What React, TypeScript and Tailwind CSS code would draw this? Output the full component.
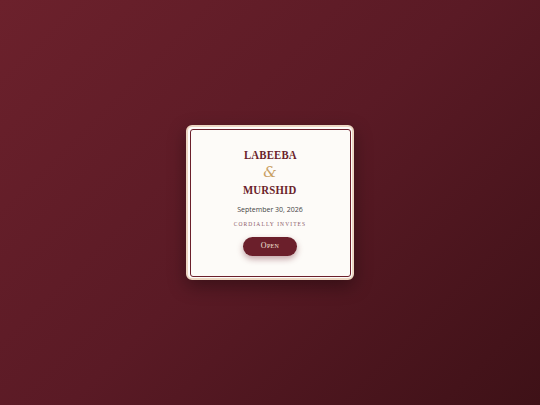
import React from "react";

export default function App() {
  return (
    <div className="w-[540px] h-[405px] flex items-center justify-center bg-[linear-gradient(135deg,#6c212c_0%,#5a1a25_50%,#3e1117_100%)]">
      <div className="w-[168px] h-[155px] rounded-[6px] border-2 border-[#ecd6c2] bg-[#fdfbf8] p-[1.5px] shadow-[0_6px_18px_rgba(0,0,0,0.35)]">
        <div className="w-full h-full rounded-[3px] border-[1.5px] border-[#6b1f2b] flex flex-col items-center pt-[18px]" style={{ fontFamily: '"Liberation Serif", serif' }}>
          <div className="text-[12px] leading-[14px] font-bold tracking-[0.2px] text-[#6b1f2b] scale-x-[0.9]">LABEEBA</div>
          <div className="text-[15px] leading-[18px] italic text-[#c9a063] mt-[1px]" style={{ fontFamily: '"DejaVu Serif", serif' }}>&amp;</div>
          <div className="text-[12px] leading-[14px] font-bold tracking-[0.2px] text-[#6b1f2b] mt-[2px] scale-x-[0.9]">MURSHID</div>
          <div className="text-[7px] leading-[9px] text-[#444] mt-[8px]" style={{ fontFamily: '"Open Sans", sans-serif' }}>September 30, 2026</div>
          <div className="text-[5.5px] leading-[8px] tracking-[1.1px] text-[#8b5a68] mt-[6px]">CORDIALLY INVITES</div>
          <div className="mt-[9px] w-[54px] h-[19px] rounded-full bg-[#6b1f2b] flex items-center justify-center text-[#f3e3d6] text-[8px] font-normal shadow-[0_3px_6px_rgba(107,31,43,0.4)] [font-variant:small-caps] tracking-[0.3px]">Open</div>
        </div>
      </div>
    </div>
  );
}
